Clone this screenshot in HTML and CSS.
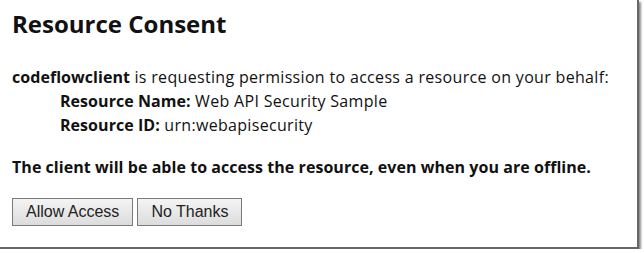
FILE: index.html
```html
<!DOCTYPE html>
<html>
<head>
<meta charset="utf-8">
<link rel="stylesheet" href="styles.css">
</head>
<body>
<div class="page">
  <h1 class="title">Resource Consent</h1>
  <div class="request">
    <p class="line"><strong>codeflowclient</strong> is requesting permission to access a resource on your behalf:</p>
    <div class="details">
      <p class="line"><strong>Resource Name:</strong> Web API Security Sample</p>
      <p class="line"><strong>Resource ID:</strong> urn:webapisecurity</p>
    </div>
  </div>
  <p class="offline">The client will be able to access the resource, even when you are offline.</p>
  <div class="actions">
    <button class="btn" type="button">Allow Access</button>
    <button class="btn" type="button">No Thanks</button>
  </div>
</div>
</body>
</html>
```
FILE: styles.css
```css
html, body {
  margin: 0;
  padding: 0;
  background: #ffffff;
}
.page {
  width: 639px;
  height: 249px;
  box-sizing: border-box;
  padding: 10px 12px 0 12px;
  background: #ffffff;
  border-right: 2px solid #666666;
  border-bottom: 2px solid #666666;
  box-shadow: 2px 2px 2px rgba(0,0,0,0.45);
  font-family: "Open Sans", sans-serif;
  color: #111111;
  font-size: 16px;
}
.title {
  margin: 0;
  font-size: 24px;
  line-height: 28px;
  font-weight: 700;
}
.request {
  margin-top: 27px;
}
.line {
  margin: 0;
  line-height: 24px;
  letter-spacing: 0.32px;
}
.line strong {
  letter-spacing: 0.05px;
}
.details {
  padding-left: 48px;
}
.offline {
  margin: 18px 0 0 0;
  line-height: 24px;
  font-weight: 700;
  letter-spacing: 0.05px;
}
.actions {
  display: flex;
  gap: 4px;
  margin-top: 19px;
}
.btn {
  height: 28px;
  padding: 0 13px;
  border: 1px solid #7a7a7a;
  border-radius: 0;
  background: linear-gradient(#f4f4f4, #dcdcdc);
  font-family: "Liberation Sans", Arial, sans-serif;
  font-size: 16px;
  color: #222222;
}
```
